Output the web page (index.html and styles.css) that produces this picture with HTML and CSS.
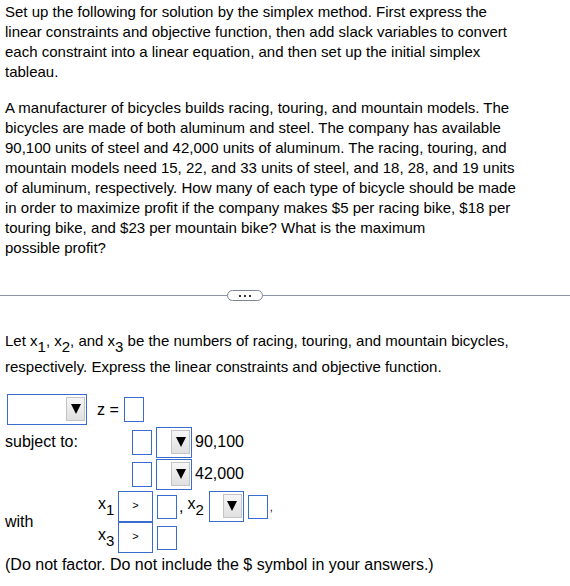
FILE: index.html
```html
<!DOCTYPE html>
<html>
<head>
<meta charset="utf-8">
<link rel="stylesheet" href="styles.css">
</head>
<body>
<div class="page">
  <p class="para first">Set up the following for solution by the simplex method. First express the linear constraints and objective function, then add slack variables to convert each constraint into a linear equation, and then set up the initial simplex tableau.</p>
  <p class="para">A manufacturer of bicycles builds racing, touring, and mountain models. The bicycles are made of both aluminum and steel. The company has available 90,100 units of steel and 42,000 units of aluminum. The racing, touring, and mountain models need 15, 22, and 33 units of steel, and 18, 28, and 19 units of aluminum, respectively. How many of each type of bicycle should be made in order to maximize profit if the company makes $5 per racing bike, $18 per touring bike, and $23 per mountain bike? What is the maximum<br>possible profit?</p>

  <div class="sep"><span class="sep-btn"><i></i><i></i><i></i></span></div>

  <p class="para intro">Let x<sub>1</sub>, x<sub>2</sub>, and x<sub>3</sub> be the numbers of racing, touring, and mountain bicycles, respectively. Express the linear constraints and objective function.</p>

  <div class="row obj">
    <span class="dd wide"><span class="dd-btn"></span></span>
    <span class="zeq">z =</span>
    <span class="box"></span>
  </div>

  <div class="subject">
    <div class="label">subject to:</div>
    <div class="rows">
      <div class="row cons">
        <span class="box"></span>
        <span class="dd mid"><span class="dd-btn"></span></span>
        <span class="num">90,100</span>
      </div>
      <div class="row cons">
        <span class="box"></span>
        <span class="dd mid"><span class="dd-btn"></span></span>
        <span class="num">42,000</span>
      </div>
    </div>
  </div>

  <div class="with">
    <div class="label with-label">with</div>
    <div class="rows">
      <div class="row nn">
        <span class="var">x<sub>1</sub></span>
        <span class="gt">&gt;</span>
        <span class="box"></span>
        <span class="comma">,</span>
        <span class="var x2">x<sub>2</sub></span>
        <span class="dd small"><span class="dd-btn"></span></span>
        <span class="box"></span>
        <span class="comma2">,</span>
      </div>
      <div class="row nn">
        <span class="var">x<sub>3</sub></span>
        <span class="gt">&gt;</span>
        <span class="box"></span>
      </div>
    </div>
  </div>

  <p class="para note">(Do not factor. Do not include the $ symbol in your answers.)</p>
</div>
</body>
</html>
```

FILE: styles.css
```css
html, body {
  margin: 0;
  padding: 0;
  background: #fff;
}
body {
  font-family: "Liberation Sans", Arial, sans-serif;
  font-size: 15px;
  color: #000;
}
.page {
  padding: 2px 5px 0 5px;
}
.para {
  margin: 0;
  line-height: 20px;
  max-width: 512px;
}
.para + .para {
  margin-top: 16px;
}
sub {
  font-size: 15px;
  vertical-align: -6px;
  line-height: 0;
}
.sep {
  position: relative;
  margin: 37px -5px 0 -5px;
  height: 1px;
  background: #8d96a6;
}
.sep-btn {
  position: absolute;
  left: 227px;
  top: -5px;
  width: 34px;
  height: 9px;
  border: 1px solid #7d8696;
  border-radius: 6px;
  background: #fff;
  display: flex;
  align-items: center;
  justify-content: center;
  gap: 3px;
}
.sep-btn i {
  display: block;
  width: 2px;
  height: 2px;
  background: #333;
}
.para.intro {
  margin-top: 32px;
  line-height: 26px;
  max-width: none;
}
.row {
  display: flex;
  align-items: center;
  height: 31px;
}
.obj {
  margin-top: 14px;
  padding-left: 2px;
}
.box {
  display: inline-block;
  box-sizing: border-box;
  width: 20px;
  height: 25px;
  border: 1px solid #3a6bcf;
  background: #fff;
}
.dd {
  position: relative;
  display: inline-block;
  box-sizing: border-box;
  height: 31px;
  border: 1px solid #3a6bcf;
  background: #fff;
}
.dd.wide { width: 80px; }
.dd.mid { width: 36px; }
.dd.small { width: 35px; }
.dd-btn {
  position: absolute;
  right: 1px;
  top: 2px;
  width: 19px;
  height: 24px;
  box-sizing: border-box;
  border: 1px solid #c4c4c4;
  background: linear-gradient(#f6f6f6, #e0e0e0);
  display: flex;
  align-items: center;
  justify-content: center;
}
.dd-btn::after {
  content: "";
  display: block;
  width: 0;
  height: 0;
  border-left: 5px solid transparent;
  border-right: 5px solid transparent;
  border-top: 10px solid #000;
}
.zeq {
  margin-left: 10px;
  margin-right: 5px;
  font-size: 16px;
}
.subject, .with {
  display: flex;
  font-size: 16px;
}
.subject {
  margin-top: 1px;
}
.subject .label {
  width: 127px;
  height: 31px;
  line-height: 31px;
}
.cons {
  height: 32px;
}
.cons .dd {
  margin-left: 4px;
}
.num {
  margin-left: 3px;
}
.with {
  margin-top: 1px;
  align-items: center;
}
.with-label {
  width: 93px;
}
.nn .var {
  width: 20px;
  position: relative;
  top: -3px;
}
.gt {
  display: inline-block;
  box-sizing: border-box;
  width: 35px;
  height: 31px;
  border: 1px solid #3a6bcf;
  font-size: 11px;
  line-height: 27px;
  text-align: center;
}
.nn + .nn .gt {
  margin-top: -1px;
}
.nn .box {
  margin-left: 4px;
  height: 24px;
}
.comma {
  margin-left: 2px;
}
.var.x2 {
  width: auto;
  margin-left: 4px;
  margin-right: 5px;
}
.dd.small + .box {
  margin-left: 4px;
}
.comma2 {
  margin-left: 2px;
  font-size: 11px;
}
.para.note {
  margin-top: 2px;
  font-size: 16px;
  max-width: none;
}
```
